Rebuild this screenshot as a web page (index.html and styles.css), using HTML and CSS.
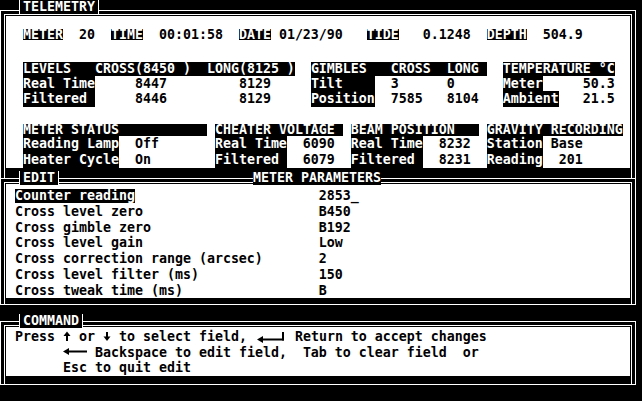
FILE: index.html
```html
<!DOCTYPE html>
<html lang="en">
<head>
    <meta charset="UTF-8">
    <title>Telemetry - Meter Parameters</title>
    <link rel="stylesheet" href="styles.css">
</head>
<body>

<div class="screen">

    <!-- Telemetry readout -->
    <section class="panel panel-telemetry">
        <span class="caption caption-first">TELEMETRY</span>
        <div class="frame">
            <div class="body tele">
                <div class="line line-top">  <span class="tag">METER</span>  20  <span class="tag">TIME</span>  00:01:58  <span class="tag">DATE</span> 01/23/90   <span class="tag">TIDE</span>   0.1248  <span class="tag">DEPTH</span>  504.9</div>
                <div class="line line-head">  <span class="tag">LEVELS   CROSS(8450 )  LONG(8125 )</span>  <span class="tag">GIMBLES   CROSS  LONG </span>  <span class="tag">TEMPERATURE °C</span></div>
                <div class="line line-15">  <span class="tag">Real Time</span>     8447         8129     <span class="tag">Tilt    </span>  3      0      <span class="tag">Meter</span>     50.3</div>
                <div class="line line-16">  <span class="tag">Filtered </span>     8446         8129     <span class="tag">Position</span>  7585   8104   <span class="tag">Ambient</span>   21.5</div>
                <div class="line line-head-low">  <span class="tag">METER STATUS           </span> <span class="tag">CHEATER VOLTAGE </span> <span class="tag">BEAM POSITION   </span> <span class="tag">GRAVITY RECORDING</span></div>
                <div class="line line-16">  <span class="tag">Reading Lamp</span>  Off       <span class="tag">Real Time</span>  6090  <span class="tag">Real Time</span>  8232  <span class="tag">Station</span> Base</div>
                <div class="line line-16">  <span class="tag">Heater Cycle</span>  On        <span class="tag">Filtered </span>  6079  <span class="tag">Filtered </span>  8231  <span class="tag">Reading</span>  201</div>
            </div>
        </div>
    </section>

    <!-- Edit form for meter parameters -->
    <section class="panel panel-edit">
        <span class="caption">EDIT</span>
        <span class="caption caption-plain">METER PARAMETERS</span>
        <div class="frame">
            <div class="body edit">
                <div class="param"><span class="param-name"><span class="pick">Counter reading</span></span><span>2853_</span></div>
                <div class="param"><span class="param-name">Cross level zero</span><span>B450</span></div>
                <div class="param"><span class="param-name">Cross gimble zero</span><span>B192</span></div>
                <div class="param"><span class="param-name">Cross level gain</span><span>Low</span></div>
                <div class="param"><span class="param-name">Cross correction range (arcsec)</span><span>2</span></div>
                <div class="param"><span class="param-name">Cross level filter (ms)</span><span>150</span></div>
                <div class="param"><span class="param-name">Cross tweak time (ms)</span><span>B</span></div>
            </div>
        </div>
    </section>

    <!-- Key help -->
    <section class="panel panel-command">
        <span class="caption">COMMAND</span>
        <div class="frame">
            <div class="body command">
                <div class="cmd"> Press <svg class="key" width="8" height="15" viewBox="0 0 8 15" aria-label="up"><polygon points="0.5,7 4,2.5 7.5,7" fill="#000"/><rect x="3" y="6" width="2" height="6" fill="#000"/></svg> or <svg class="key" width="8" height="15" viewBox="0 0 8 15" aria-label="down"><polygon points="0.5,7.5 4,12 7.5,7.5" fill="#000"/><rect x="3" y="3" width="2" height="6" fill="#000"/></svg> to select field, <svg class="key" width="32" height="15" viewBox="0 0 32 15"><polygon points="2,10.5 8,7 8,14" fill="#000"/><rect x="7" y="9.5" width="22" height="2" fill="#000"/><rect x="27" y="3" width="2" height="8.5" fill="#000"/></svg> Return to accept changes</div>
                <div class="cmd">       <svg class="key" width="24" height="15" viewBox="0 0 24 15"><polygon points="0,6.5 6,3 6,10" fill="#000"/><rect x="5" y="5.5" width="19" height="2" fill="#000"/></svg> Backspace to edit field,  Tab to clear field  or</div>
                <div class="cmd">       Esc to quit edit</div>
            </div>
        </div>
    </section>

</div>

</body>
</html>
```

FILE: styles.css
```css
body {
    margin: 0;
    background-color: #000;
    color: #000;
    font-family: 'DejaVu Sans Mono', 'Liberation Mono', monospace;
    font-size: 13.29px; /* 1ch = 8px, one text-mode cell */
    font-weight: bold;
}
.screen {
    width: 642px;
    height: 401px;
    overflow: hidden;
}

/* double-line frames */
.panel {
    position: relative;
    box-sizing: border-box;
    width: 636px;
    border: 1px solid #fff;
    border-bottom: none;
    padding: 3px 3px 0;
}
.frame {
    border: 1px solid #fff;
    border-bottom: none;
    padding: 1px;
}
.body {
    background: #fff;
    padding-left: 1px;
}
.panel-telemetry {
    margin-top: 10px;
}
.panel-telemetry .frame {
    padding-bottom: 10px;
}
.panel-edit,
.panel-command {
    border-bottom: 1px solid #fff;
}
.panel-edit .frame {
    padding-bottom: 6px;
}
.panel-command {
    margin-top: 16px;
}
.panel-command .frame {
    padding-bottom: 8px;
}

/* titles sitting on the top line */
.caption {
    position: absolute;
    top: -8px;
    left: 18px;
    height: 14px;
    line-height: 14px;
    padding: 0 3px;
    border-left: 1px solid #fff;
    border-right: 1px solid #fff;
    background: #000;
    color: #fff;
    white-space: pre;
}
.caption-first {
    top: -11px;
}
.caption-plain {
    left: 252px;
    padding: 0;
    border: none;
}

/* telemetry rows, laid out on the character grid */
.tele {
    box-sizing: border-box;
    height: 152px;
    padding-top: 13px;
}
.line {
    white-space: pre;
}
.tag {
    display: inline-block;
    height: 100%;
    vertical-align: top;
    background: #000;
    color: #fff;
}
.line-top {
    height: 11px;
    line-height: 11px;
}
.line-head {
    margin-top: 22px;
    height: 14px;
    line-height: 14px;
}
.line-head-low {
    margin-top: 17px;
    height: 12px;
    line-height: 12px;
}
.line-15 {
    height: 15px;
    line-height: 15px;
}
.line-16 {
    height: 16px;
    line-height: 16px;
}

/* edit list */
.edit {
    height: 114px;
    padding-top: 4px;
    box-sizing: border-box;
}
.param {
    display: flex;
    padding-left: 1ch;
    height: 15.75px;
    line-height: 15.75px;
    white-space: pre;
}
.param-name {
    width: 38ch;
    flex-shrink: 0;
}
.pick {
    display: inline-block;
    height: 14px;
    line-height: 14px;
    margin-top: 1px;
    vertical-align: top;
    background: #000;
    color: #fff;
}

/* command help */
.command {
    height: 49px;
    padding-top: 2px;
    box-sizing: border-box;
}
.cmd {
    height: 15.5px;
    line-height: 15.5px;
    white-space: pre;
}
.key {
    display: inline-block;
    vertical-align: top;
}
```
